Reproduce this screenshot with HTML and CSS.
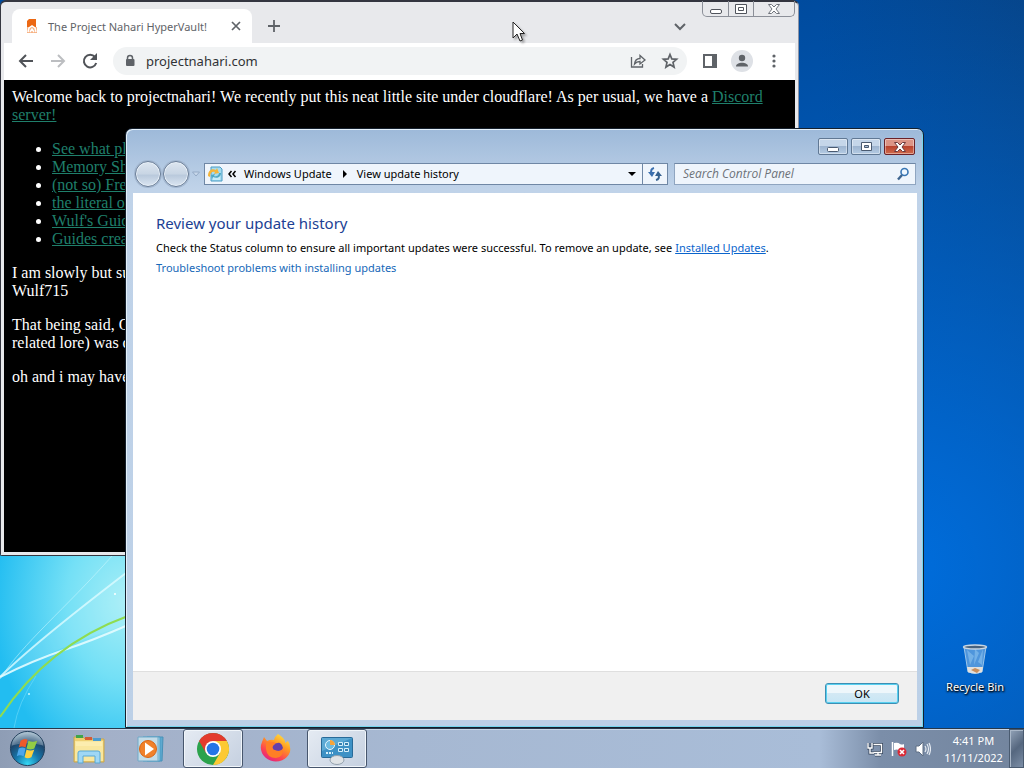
FILE: index.html
```html
<!DOCTYPE html>
<html lang="en">
<head>
  <meta charset="UTF-8" />
  <title>Desktop</title>
  <link rel="stylesheet" href="styles.css">
</head>
<body>

  <main class="desktop">
    <svg class="streaks" viewBox="0 0 140 180" aria-hidden="true">
      <defs>
        <radialGradient id="glow" cx="0.9" cy="0.3" r="0.95">
          <stop offset="0" stop-color="#a6eef6" />
          <stop offset="0.45" stop-color="#74e0f6" />
          <stop offset="1" stop-color="#22bdf1" />
        </radialGradient>
      </defs>
      <rect width="140" height="180" fill="url(#glow)" />
      <path d="M0 129Q50 80 125 26V77Q60 98 0 129z" fill="#d0f8ff" opacity=".15" />
      <path d="M0 129C25 104 62 74 126 25" stroke="#dcfbff" stroke-width="2" fill="none" opacity=".8" />
      <path d="M0 131C22 96 66 60 112 8" stroke="#d5faff" fill="none" opacity=".5" />
      <path d="M0 129Q34 112 64 102T128 77" stroke="#e4fcff" stroke-width="2" fill="none" opacity=".9" />
      <path d="M14 180Q18 155 36 128" stroke="#6fdcfa" fill="none" opacity=".6" />
      <path d="M0 169Q48 97 128 68" stroke="#8fdc50" stroke-width="2" fill="none" />
      <circle cx="29" cy="146" r="1" fill="#c8f6ff" />
      <circle cx="115" cy="46" r="1" fill="#fff" />
    </svg>

    <section class="browser" aria-label="Browser">
      <div class="tab-strip">
        <div class="tab">
          <svg class="favicon" viewBox="0 0 12 16"><path d="M3 1h7v11H1V3z" fill="#ec6813" /><path d="M1 9h10v6H1z" fill="#f7b283" /><path d="M2 14l1-4 3-2 3 2 1 4M4 14l2-3 2 3" fill="none" stroke="#fff" stroke-width="1.500" /></svg>
          <span class="tab-title">The Project Nahari HyperVault!</span>
          <button class="icon-btn small" aria-label="Close tab"><svg viewBox="0 0 16 16"><path d="M4 4l8 8M12 4l-8 8" stroke="#5f6368" stroke-width="1.700" /></svg></button>
        </div>
        <button class="icon-btn new-tab" aria-label="New tab"><svg viewBox="0 0 16 16"><path d="M8 2v12M2 8h12" stroke="#5f6368" stroke-width="1.800" /></svg></button>
        <button class="icon-btn tab-search" aria-label="Search tabs"><svg viewBox="0 0 16 16"><path d="M3 6l5 5 5-5" fill="none" stroke="#5f6368" stroke-width="2" /></svg></button>
        <div class="browser-controls">
          <button aria-label="Minimize"><svg viewBox="0 0 14 12"><rect x="1.500" y="6.500" width="11" height="4" rx="1.500" fill="#fff" stroke="#50545c" /></svg></button>
          <button aria-label="Maximize"><svg viewBox="0 0 14 12"><path d="M1.500 1.500h11v9h-11zM4.500 4.500h5v3h-5z" fill="#fff" stroke="#50545c" /></svg></button>
          <button class="wide" aria-label="Close"><svg viewBox="0 0 14 12"><path d="M1.500 1.500h3l2.500 2.500 2.500-2.500h3l-3.500 4.500 3.500 4.500h-3l-2.500-2.500-2.500 2.500h-3l3.500-4.500z" fill="#fff" stroke="#70747c" /></svg></button>
        </div>
      </div>

      <div class="toolbar">
        <button class="icon-btn" aria-label="Back"><svg viewBox="0 0 18 18"><path d="M16 9H3M9 3L3 9l6 6" fill="none" stroke="#505358" stroke-width="2" /></svg></button>
        <button class="icon-btn" aria-label="Forward"><svg viewBox="0 0 18 18"><path d="M2 9h13M9 3l6 6-6 6" fill="none" stroke="#bcbec1" stroke-width="2" /></svg></button>
        <button class="icon-btn" aria-label="Reload"><svg viewBox="0 0 18 18"><path d="M14 5A6.300 6.300 0 1 0 15.200 11" fill="none" stroke="#505358" stroke-width="2" /><path d="M16 1v7H9z" fill="#505358" /></svg></button>
        <div class="omnibox">
          <svg class="lock" viewBox="0 0 10 14"><path d="M2.500 6V4a2.500 2.500 0 0 1 5 0v2" fill="none" stroke="#5f6368" stroke-width="1.500" /><rect x="1" y="5" width="8.500" height="7" rx="1" fill="#5f6368" /></svg>
          <input type="text" value="projectnahari.com" aria-label="Address">
          <button class="icon-btn" aria-label="Share"><svg viewBox="0 0 18 18"><path d="M2.500 5v10h11v-3" fill="none" stroke="#5f6368" stroke-width="1.300" /><path d="M5.500 12C6 8 8 6.500 11 6.500V3.500l5 4.500-5 4V9.500Q7.500 9.500 5.500 12z" fill="none" stroke="#5f6368" stroke-width="1.300" /></svg></button>
          <button class="icon-btn" aria-label="Bookmark"><svg viewBox="0 0 18 18"><path d="M9 2.500l1.800 4.400 4.800.4-3.600 3.100 1.100 4.700L9 12.600l-4.100 2.500L6 10.400 2.400 7.300l4.800-.4z" fill="none" stroke="#5f6368" stroke-width="1.700" /></svg></button>
        </div>
        <button class="icon-btn" aria-label="Side panel"><svg viewBox="0 0 18 18"><path d="M3 3h12v12H3z" fill="#fff" stroke="#5f6368" stroke-width="2" /><path d="M11 3h5v12h-5z" fill="#5f6368" /></svg></button>
        <button class="icon-btn avatar" aria-label="Profile"><svg viewBox="0 0 18 18"><circle cx="9" cy="6" r="3.200" fill="#5f6368" /><path d="M3 14.500c0-5 12-5 12 0z" fill="#5f6368" /></svg></button>
        <button class="icon-btn" aria-label="Menu"><svg viewBox="0 0 18 18" fill="#5f6368"><circle cx="9" cy="4" r="1.600" /><circle cx="9" cy="9" r="1.600" /><circle cx="9" cy="14" r="1.600" /></svg></button>
      </div>

      <article class="page">
        Welcome back to projectnahari! We recently put this neat little site under cloudflare! As per usual, we have a <a href="#">Discord server!</a>
        <ul>
          <li><a href="#">See what pla</a></li>
          <li><a href="#">Memory Sha</a></li>
          <li><a href="#">(not so) Free</a></li>
          <li><a href="#">the literal on</a></li>
          <li><a href="#">Wulf's Guide</a></li>
          <li><a href="#">Guides creat</a></li>
        </ul>
        <p>I am slowly but sur<br>Wulf715</p>
        <p>That being said, O<br>related lore) was c</p>
        <p>oh and i may have</p>
      </article>
    </section>

    <section class="panel" aria-label="View update history">
      <div class="panel-controls">
        <button aria-label="Minimize"><svg viewBox="0 0 14 12"><rect x="1.500" y="6.500" width="11" height="4" rx="1" fill="#fff" stroke="#4a5a70" /></svg></button>
        <button aria-label="Maximize"><svg viewBox="0 0 14 12"><path d="M2.500 1.500h10v8h-10z" fill="#fff" stroke="#4a5a70" /><path d="M5.500 4.500h4v2h-4z" fill="#a9bdd6" stroke="#4a5a70" /></svg></button>
        <button class="close" aria-label="Close"><svg viewBox="0 0 14 12"><path d="M1.500 1.500h3l2.500 2.500 2.500-2.500h3l-3.500 4.500 3.500 4.500h-3l-2.500-2.500-2.500 2.500h-3l3.500-4.500z" fill="#fff" stroke="#6b3a3e" /></svg></button>
      </div>

      <div class="nav-row">
        <div class="travel">
          <button aria-label="Back"></button>
          <button aria-label="Forward"></button>
          <svg viewBox="0 0 10 8"><path d="M1.500 2h7L5 6z" fill="#c9d9ec" stroke="#94aac6" /></svg>
        </div>
        <div class="address">
          <svg class="address-icon" viewBox="0 0 16 16"><path d="M4 1h9l2 2v12H4z" fill="#a5dcf0" stroke="#4a9cc4" /><path d="M6 11h7M6 13h7" stroke="#e8faff" /><path d="M1 10C1 4 5 2 9 4l1-2 2 5-5 1 1-2C5 5 3 7 3 11z" fill="#f4b53a" /><path d="M14 7c0 4-4 6-8 4l-1 2-1-4 4-1-1 2c3 1 5-1 5-3z" fill="#4fa9c4" /></svg>
          <span class="crumbs">
            <svg class="chevrons" viewBox="0 0 10 8"><path d="M4.500 1L2 4l2.500 3M8.500 1L6 4l2.500 3" fill="none" stroke="#000" stroke-width="1.500" /></svg>
            <a href="#">Windows Update</a>
            <svg class="arrow" viewBox="0 0 6 8"><path d="M1 0l4 4-4 4z" /></svg>
            <a href="#">View update history</a>
          </span>
          <button class="drop" aria-label="Previous locations"><svg viewBox="0 0 8 8"><path d="M0 2h8L4 6z" /></svg></button>
          <button class="refresh" aria-label="Refresh"><svg viewBox="0 0 16 16"><path d="M7 2Q3 3 4.500 8" fill="none" stroke="#3b6fae" stroke-width="2" /><path d="M1 6h7l-3 5z" fill="#3b6fae" /><path d="M9 14q4-1 2.500-5" fill="none" stroke="#35618f" stroke-width="2" /><path d="M8 10h7l-4-5z" fill="#35618f" /></svg></button>
        </div>
        <div class="search">
          <input type="text" placeholder="Search Control Panel" aria-label="Search Control Panel">
          <svg viewBox="0 0 14 14"><circle cx="8.500" cy="5" r="3.500" fill="#eef7ff" stroke="#3976b4" stroke-width="1.600" /><path d="M6 8l-4 4.500" stroke="#3d648f" stroke-width="2.400" /></svg>
        </div>
      </div>

      <div class="panel-body">
        <div class="history">
          <h1>Review your update history</h1>
          <p>Check the Status column to ensure all important updates were successful. To remove an update, see <a class="underlined" href="#">Installed Updates</a>.</p>
          <p><a href="#">Troubleshoot problems with installing updates</a></p>
        </div>
        <div class="panel-footer">
          <button class="ok">OK</button>
        </div>
      </div>
    </section>

    <a class="recycle-bin" href="#">
      <svg viewBox="0 0 28 34">
        <path d="M3 4l4 25q7 3 14 0l4-25z" fill="#4f96dc" stroke="#9cc6ea" />
        <path d="M6 7l3 15 4-9zM14 6l-1 16 5-12zM22 6l-5 13 4 3z" fill="#8cc3ef" opacity=".6" />
        <path d="M6 24h16l-1 5q-7 3-14 0z" fill="#e2e0dc" />
        <path d="M10 27l4-2 5 2-3 3z" fill="#c98f5d" />
        <ellipse cx="14" cy="4" rx="11.500" ry="2" fill="#46627e" stroke="#c9d6e2" stroke-width="1.500" />
      </svg>
      <span>Recycle Bin</span>
    </a>

    <svg class="cursor" viewBox="0 0 13 21" aria-hidden="true"><path d="M1 1v16l4-4 3 7 2.500-1L8 12.500h4.500z" fill="#fff" stroke="#222" /></svg>
  </main>

  <footer class="taskbar">
    <button class="start" aria-label="Start">
      <svg viewBox="0 0 40 40">
        <defs>
          <radialGradient id="orb" cx="0.5" cy="0.95" r="0.9">
            <stop offset="0" stop-color="#35d8f4" />
            <stop offset="0.4" stop-color="#1678ac" />
            <stop offset="0.75" stop-color="#1d466c" />
            <stop offset="1" stop-color="#8ba9be" />
          </radialGradient>
        </defs>
        <circle cx="20" cy="20" r="17.500" fill="url(#orb)" stroke="#23405c" />
        <path d="M4 17a16 14 0 0 1 32 0q-16-5-32 0z" fill="#fff" opacity=".25" />
        <path d="M13 12q4-3 7-1l-2 8q-4-2-7 0z" fill="#ee5a2b" />
        <path d="M21 12q4 2 9 0l-3 8q-4 2-8 0z" fill="#93cc44" />
        <path d="M11 20q4-2 7 0l-2 8q-4-2-7 0z" fill="#4ca6ea" />
        <path d="M19 21q4 2 8 0l-3 8q-4 2-7 0z" fill="#fcd140" />
      </svg>
    </button>
    <nav class="tasks">
      <button aria-label="Windows Explorer">
        <svg viewBox="0 0 36 36">
          <path d="M3 6h9l2 2h19v23H3z" fill="#efcf72" stroke="#c8a64c" />
          <path d="M5 4h7v3H5z" fill="#3fa549" /><path d="M14 6h7v3h-7z" fill="#d65b35" /><path d="M22 7h8v3h-8z" fill="#4c9bd0" />
          <path d="M4 10h28v20H4z" fill="#f9e79f" />
          <path d="M5 12h26M5 14h26" stroke="#fff3bf" />
          <path d="M7 32V22q0-2 2-2h18q2 0 2 2v10h-5v-7H12v7z" fill="#9fd7f5" stroke="#58a8d4" />
        </svg>
      </button>
      <button aria-label="Windows Media Player">
        <svg viewBox="0 0 36 36">
          <path d="M14 6h16l-1 24H14z" fill="#5ea9cf" stroke="#4791b8" />
          <path d="M10 6h17v24H10z" fill="#a1d4e8" stroke="#4b9cc6" />
          <path d="M5 6h20v24H5z" fill="#c3dce8" stroke="#70a9c8" />
          <circle cx="15" cy="18" r="8.500" fill="#f0812b" stroke="#d96514" />
          <path d="M12 11.500v13L21 18z" fill="#fff" />
        </svg>
      </button>
      <button class="open" aria-label="Google Chrome">
        <svg viewBox="0 0 36 36">
          <circle cx="18" cy="18" r="16" fill="#2ba24c" />
          <path d="M18 18L4.140 10A16 16 0 0 1 31.860 10z" fill="#e33b2e" />
          <path d="M18 10h13.860A16 16 0 0 1 18 34l7-12z" fill="#fcc934" />
          <path d="M4.140 10L11 22l7-12z" fill="#e33b2e" />
          <circle cx="18" cy="18" r="8" fill="#fff" />
          <circle cx="18" cy="18" r="6.300" fill="#2575e6" />
        </svg>
      </button>
      <button aria-label="Firefox">
        <svg viewBox="0 0 36 36">
          <defs>
            <linearGradient id="fox" x1="0.9" y1="0" x2="0.3" y2="1">
              <stop offset="0" stop-color="#fff04a" />
              <stop offset="0.4" stop-color="#ff9b21" />
              <stop offset="0.75" stop-color="#fd4550" />
              <stop offset="1" stop-color="#e32282" />
            </linearGradient>
          </defs>
          <path d="M21 3q8 5 7 9l3-2q3 4 2 11A15 14 0 1 1 5 11l2-5 3 4q4-2 7-1 1-4 4-6z" fill="url(#fox)" />
          <circle cx="19" cy="19" r="6.500" fill="#8148c8" />
          <path d="M9 12q6-3 11 1l-4 2q-1 3 2 4 6 2 8-2 1 9-7 10Q10 27 9 18z" fill="#ff7f25" />
          <path d="M16 15q-1 3 2 4 6 2 8-2 0-3-3-5-4-1-7 3z" fill="#6440a8" />
        </svg>
      </button>
      <button class="open" aria-label="Control Panel">
        <svg viewBox="0 0 36 36">
          <rect x="2.500" y="6.500" width="31" height="20" rx="1" fill="#3d91c5" stroke="#286a98" />
          <path d="M3 7h30L3 20z" fill="#7bc2e4" opacity=".5" />
          <circle cx="11" cy="14" r="4.500" fill="#6dbae0" stroke="#e6f7ff" />
          <path d="M11 14V9a5 5 0 0 1 5 5z" fill="#f7a43a" />
          <path d="M19.500 11.500h4v3h-4zM25.500 11.500h4v3h-4zM19.500 17.500h4v3h-4zM25.500 17.500h4v3h-4z" fill="#367faf" stroke="#d7f0fb" />
          <path d="M7 22h7" stroke="#d7f0fb" stroke-width="2" stroke-dasharray="2 1" />
          <ellipse cx="18" cy="29" rx="7" ry="4.500" fill="#dfe3e6" stroke="#93a1ad" />
        </svg>
      </button>
    </nav>
    <div class="tray">
      <svg viewBox="0 0 16 16"><path d="M6.500 3.500h8v8h-8M8 14h6M11 12v2M1 2v5h4V2M3 7v5h4" fill="none" stroke="#36465c" stroke-width="3" /><path d="M6.500 3.500h8v8h-8M8 14h6M11 12v2M1 2v5h4V2M3 7v5h4" fill="none" stroke="#fff" stroke-width="1.400" /></svg>
      <svg viewBox="0 0 16 16"><path d="M1.500 1v14" stroke="#fff" stroke-width="1.500" /><path d="M3 2q4-1 6 1 2 1 4 0v7q-3 1-5-1-2-1-5 0z" fill="#fff" /><circle cx="11" cy="11" r="4.500" fill="#da2a36" /><path d="M9 9l4 4M13 9l-4 4" stroke="#fff" stroke-width="1.600" /></svg>
      <svg viewBox="0 0 16 16"><path d="M1 5h3l4-4v14l-4-4H1z" fill="#fff" stroke="#5e6f84" /><path d="M10 5q2 3 0 6M12 3q3 5 0 10M14 2q3 6 0 12" fill="none" stroke="#e5ebf2" stroke-width="1.200" /></svg>
    </div>
    <time class="clock" datetime="2022-11-11T16:41">4:41 PM<br>11/11/2022</time>
    <button class="show-desktop" aria-label="Show desktop"></button>
  </footer>

</body>
</html>
```
FILE: styles.css
```css
* {
  box-sizing: border-box;
}

body {
  margin: 0;
  height: 100vh;
  display: flex;
  flex-direction: column;
  overflow: hidden;
  font-family: "Noto Sans", "Segoe UI", sans-serif;
  font-size: 11px;
}

button {
  padding: 0;
  border: none;
  background: none;
  font-family: inherit;
}

svg {
  display: block;
}

/* desktop */
.desktop {
  position: relative;
  flex: 1;
  background:
    radial-gradient(circle at 88% 78%, #006ddc 0, rgba(0, 109, 220, 0) 56%),
    linear-gradient(to left, #06458a, #004a9c 20%, #004a9c);
}

.streaks {
  position: absolute;
  left: 0;
  bottom: 0;
  width: 140px;
  height: 180px;
}

.recycle-bin {
  position: absolute;
  right: 12px;
  bottom: 33px;
  width: 74px;
  display: flex;
  flex-direction: column;
  align-items: center;
  gap: 2px;
  color: #fff;
  line-height: 16px;
  white-space: nowrap;
  text-decoration: none;
  text-shadow: 1px 1px 2px #000, 0 1px 2px #000;
}

.recycle-bin svg {
  width: 28px;
  height: 34px;
}

.cursor {
  position: absolute;
  left: 512px;
  top: 21px;
  width: 13px;
  height: 21px;
  filter: drop-shadow(2px 2px 1px rgba(0, 0, 0, 0.3));
}

/* browser window */
.browser {
  position: absolute;
  top: 0;
  left: 0;
  right: 225px;
  bottom: 172px;
  display: flex;
  flex-direction: column;
  padding: 2px 3px 3px;
  background: #e8e9ec;
  border: 1px solid #343640;
  border-top-width: 2px;
  border-right-color: #8d94a6;
  border-radius: 6px 6px 2px 2px;
}

.tab-strip {
  display: flex;
  align-items: flex-end;
  height: 39px;
  padding-left: 8px;
}

.tab {
  display: flex;
  align-items: center;
  width: 240px;
  height: 34px;
  padding: 0 8px 0 14px;
  background: #fff;
  border-radius: 8px 8px 0 0;
}

.favicon {
  width: 12px;
  height: 16px;
}

.tab-title {
  flex: 1;
  margin-left: 10px;
  color: #5f6368;
  white-space: nowrap;
}

.icon-btn {
  width: 32px;
  height: 28px;
  display: flex;
  align-items: center;
  justify-content: center;
}

.icon-btn svg {
  width: 18px;
  height: 18px;
}

.icon-btn.small {
  width: 16px;
}

.icon-btn.small svg,
.new-tab svg,
.tab-search svg {
  width: 16px;
  height: 16px;
}

.new-tab {
  margin-left: 6px;
  margin-bottom: 3px;
}

.tab-search {
  margin-left: auto;
  margin-bottom: 3px;
}

.browser-controls {
  display: flex;
  align-self: flex-start;
  height: 16px;
  margin: -3px 0 0 6px;
  border: 1px solid #8b8f98;
  border-top: none;
  border-radius: 0 0 5px 5px;
}

.browser-controls button {
  width: 25px;
  display: flex;
  align-items: center;
  justify-content: center;
}

.browser-controls button + button {
  border-left: 1px solid #8b8f98;
}

.browser-controls .wide {
  width: 41px;
}

.browser-controls svg {
  width: 14px;
  height: 12px;
}

.toolbar {
  display: flex;
  align-items: center;
  height: 37px;
  padding: 0 5px 2px 6px;
  background: #fff;
}

.omnibox {
  flex: 1;
  display: flex;
  align-items: center;
  height: 28px;
  margin: 0 7px;
  padding: 0 1px 0 12px;
  background: #f1f3f4;
  border-radius: 14px;
}

.lock {
  width: 10px;
  height: 14px;
}

.omnibox input {
  flex: 1;
  min-width: 0;
  margin-left: 11px;
  padding: 0;
  border: none;
  background: none;
  color: #303236;
  font: 13px "Noto Sans", sans-serif;
}

.avatar svg {
  width: 22px;
  height: 22px;
  padding: 2px;
  background: #dee1e6;
  border-radius: 50%;
}

.page {
  flex: 1;
  padding: 8px;
  overflow: hidden;
  background: #000;
  color: #fff;
  font-family: "Liberation Serif", "Times New Roman", serif;
  font-size: 16px;
  line-height: 18px;
}

.page a {
  color: #1f7f6b;
}

.page ul {
  margin: 16px 0;
  padding-left: 40px;
}

.page p {
  margin: 16px 0;
}

/* control panel window */
.panel {
  position: absolute;
  top: 128px;
  left: 125px;
  right: 100px;
  bottom: 0;
  display: flex;
  flex-direction: column;
  padding: 0 6px 7px 7px;
  background: linear-gradient(#9db9d9, #c0d3e9 60px, #bcd0e7 100%);
  border: 1px solid #15202d;
  border-radius: 7px 7px 0 0;
  box-shadow: inset 1px 1px 0 #e4f1fb, inset -1px -1px 0 #75d6ee;
}

.panel-controls {
  display: flex;
  justify-content: flex-end;
  gap: 3px;
  padding: 9px 2px 0 0;
}

.panel-controls button {
  width: 30px;
  height: 17px;
  display: flex;
  align-items: center;
  justify-content: center;
  border: 1px solid #607894;
  border-radius: 2px;
  background: linear-gradient(#c5d6e9 45%, #9eb5d0 50%, #b4cbe4);
  box-shadow: inset 0 0 0 1px rgba(255, 255, 255, 0.4);
}

.panel-controls .close {
  width: 31px;
  border-color: #6b2229;
  background: linear-gradient(#dc9486 45%, #b9432f 50%, #d06a4c);
}

.panel-controls svg {
  width: 14px;
  height: 12px;
}

.nav-row {
  display: flex;
  align-items: center;
  height: 37px;
  padding-right: 1px;
}

.travel {
  display: flex;
  align-items: center;
  gap: 2px;
  width: 71px;
  padding-left: 2px;
}

.travel button {
  width: 26px;
  height: 26px;
  border: 1px solid #6a7d96;
  border-radius: 50%;
  background: linear-gradient(#dde6f0, #c8d5e4 50%, #b9c9dc 55%, #dbe6f2);
  box-shadow: inset 0 0 0 1px #e9f1f9, 0 0 0 1px #a3b7d0;
}

.travel svg {
  width: 10px;
  height: 8px;
}

.address {
  flex: 1;
  display: flex;
  align-items: center;
  height: 22px;
  padding-left: 2px;
  background: #eff5fc;
  border: 1px solid #6f87a5;
}

.address-icon {
  width: 16px;
  height: 16px;
}

.crumbs {
  flex: 1;
  display: flex;
  align-items: center;
  margin-left: 4px;
}

.crumbs a {
  color: #000;
  text-decoration: none;
}

.chevrons {
  width: 10px;
  height: 8px;
  margin-right: 7px;
}

.arrow {
  width: 6px;
  height: 8px;
  margin: 0 9px 0 10px;
}

.drop {
  width: 20px;
}

.drop svg {
  width: 8px;
  height: 8px;
  margin: auto;
}

.refresh {
  width: 25px;
  height: 20px;
  border-left: 1px solid #6f87a5;
}

.refresh svg {
  width: 16px;
  height: 16px;
  margin: auto;
}

.search {
  display: flex;
  align-items: center;
  width: 242px;
  height: 22px;
  margin-left: 6px;
  padding: 0 5px 0 8px;
  background: #eff5fc;
  border: 1px solid #8fa5c0;
  border-top-color: #6f87a5;
}

.search input {
  flex: 1;
  min-width: 0;
  padding: 0;
  border: none;
  background: none;
  font: italic 12px "Open Sans", sans-serif;
}

.search input::placeholder {
  color: #6d7278;
  opacity: 1;
}

.search svg {
  width: 14px;
  height: 14px;
}

.panel-body {
  flex: 1;
  display: flex;
  flex-direction: column;
  margin-top: 1px;
  background: #fff;
}

.history {
  flex: 1;
  padding: 20px 23px;
}

.history h1 {
  margin: 0 0 4px;
  color: #1c3f94;
  font-size: 15px;
  font-weight: normal;
  line-height: 21px;
}

.history p {
  margin: 0;
  line-height: 20px;
}

.history a {
  color: #1668b8;
  text-decoration: none;
}

.history .underlined {
  color: #0a64cc;
  text-decoration: underline;
}

.panel-footer {
  display: flex;
  align-items: center;
  justify-content: flex-end;
  height: 49px;
  padding: 0 18px 6px;
  background: #f0f0f0;
  border-top: 1px solid #dfdfdf;
}

.ok {
  width: 74px;
  height: 21px;
  border: 1px solid #3c8fb4;
  border-radius: 3px;
  background: linear-gradient(#eef7fb 45%, #d3e9f4 50%, #c7e6f5);
  box-shadow: inset 0 0 0 1px #57d0f0;
  font-size: 11px;
}

/* taskbar */
.taskbar {
  display: flex;
  align-items: center;
  height: 40px;
  background: linear-gradient(to right, #8e9db5, #a3b0c8 10%, #a6b8d2 40%, #a9bdd8 80%, #7b8ea9 86%, #73859e);
  border-top: 1px solid #26384b;
  box-shadow: inset 0 1px 0 #c9d7e8;
}

.start {
  width: 54px;
  height: 39px;
}

.start svg {
  width: 39px;
  height: 39px;
  margin: auto;
}

.tasks {
  flex: 1;
  display: flex;
  gap: 2px;
  padding-left: 5px;
}

.tasks button {
  width: 60px;
  height: 39px;
  border-radius: 3px;
}

.tasks .open {
  border: 1px solid #47566d;
  background: linear-gradient(135deg, #e5ebf3, #c5d0e0);
  box-shadow: inset 0 0 0 1px #f0f5fa;
}

.tasks svg {
  width: 36px;
  height: 36px;
  margin: auto;
}

.tray {
  display: flex;
  gap: 8px;
}

.tray svg {
  width: 16px;
  height: 16px;
}

.clock {
  width: 78px;
  padding-left: 7px;
  color: #fff;
  line-height: 17px;
  text-align: center;
}

.show-desktop {
  width: 15px;
  height: 39px;
  border: 1px solid #4a5b70;
  background: linear-gradient(135deg, #93a3b8, #55677f 50%, #7c8ea6);
  box-shadow: inset 1px 1px 0 #a9b7c8;
}
```
